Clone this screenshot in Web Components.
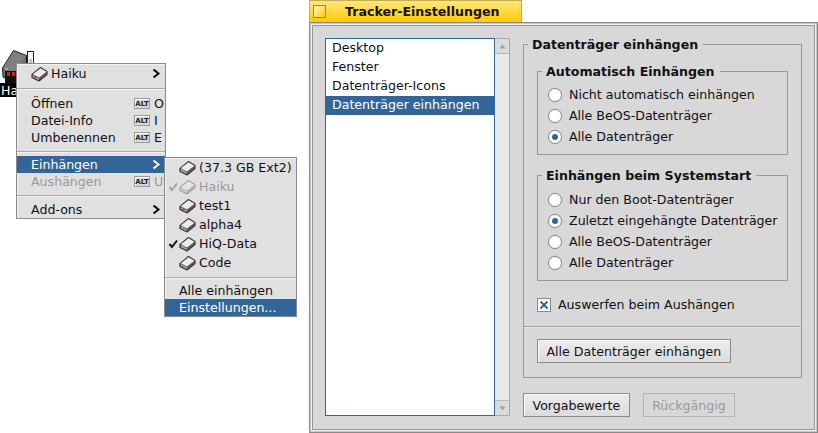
<!DOCTYPE html>
<html>
<head>
<meta charset="utf-8">
<title>Tracker-Einstellungen</title>
<style>
  html, body { margin: 0; height: 100%; background: #fff; overflow: hidden; }
  body { font: 12.6px "DejaVu Sans", sans-serif; color: #111; }
</style>
</head>
<body>
<desktop-icon label="Haiku"></desktop-icon>

<popup-menu style="left:16px;top:63px;width:148px;padding-top:1px">
  <menu-row arrow><disk-icon slot="icon" kind="boot"></disk-icon>Haiku</menu-row>
  <menu-sep big></menu-sep>
  <menu-row key="O">Öffnen</menu-row>
  <menu-row key="I">Datei-Info</menu-row>
  <menu-row key="E">Umbenennen</menu-row>
  <menu-sep></menu-sep>
  <menu-row selected arrow>Einhängen</menu-row>
  <menu-row disabled key="U">Aushängen</menu-row>
  <menu-sep style="height:11px"></menu-sep>
  <menu-row arrow>Add-ons</menu-row>
</popup-menu>

<popup-menu style="left:164px;top:157px;width:131px">
  <menu-row sub tall><disk-icon slot="icon"></disk-icon>(37.3 GB Ext2)</menu-row>
  <menu-row sub tall disabled check><disk-icon slot="icon" faded></disk-icon>Haiku</menu-row>
  <menu-row sub tall><disk-icon slot="icon" kind="red"></disk-icon>test1</menu-row>
  <menu-row sub tall><disk-icon slot="icon"></disk-icon>alpha4</menu-row>
  <menu-row sub tall check><disk-icon slot="icon"></disk-icon>HiQ-Data</menu-row>
  <menu-row sub tall><disk-icon slot="icon" kind="green"></disk-icon>Code</menu-row>
  <menu-sep></menu-sep>
  <menu-row sub plain>Alle einhängen</menu-row>
  <menu-row sub plain selected>Einstellungen...</menu-row>
</popup-menu>

<app-window title="Tracker-Einstellungen">
  <list-view slot="list">
    <list-row>Desktop</list-row>
    <list-row>Fenster</list-row>
    <list-row>Datenträger-Icons</list-row>
    <list-row selected>Datenträger einhängen</list-row>
  </list-view>

  <group-box slot="pane" label="Datenträger einhängen" outer>
    <group-box label="Automatisch Einhängen">
      <radio-row>Nicht automatisch einhängen</radio-row>
      <radio-row>Alle BeOS-Datenträger</radio-row>
      <radio-row checked>Alle Datenträger</radio-row>
    </group-box>
    <group-box label="Einhängen beim Systemstart" style="margin-top:20px;padding-top:13px">
      <radio-row>Nur den Boot-Datenträger</radio-row>
      <radio-row checked>Zuletzt eingehängte Datenträger</radio-row>
      <radio-row>Alle BeOS-Datenträger</radio-row>
      <radio-row>Alle Datenträger</radio-row>
    </group-box>
    <check-row>Auswerfen beim Aushängen</check-row>
    <push-button slot="footer">Alle Datenträger einhängen</push-button>
  </group-box>

  <push-button slot="buttons">Vorgabewerte</push-button>
  <push-button slot="buttons" disabled>Rückgängig</push-button>
</app-window>

<script>
  class DiskIcon extends HTMLElement {
    constructor() {
      super();
      this.attachShadow({ mode: "open" });
      const led = { red: "#d22", green: "#3b3", boot: "#d11" }[this.getAttribute("kind")] || "#999";
      const faded = this.hasAttribute("faded");
      this.shadowRoot.innerHTML = `
        <style>
          :host { display: block; width: 17px; height: 16px; }
          svg { display: block; opacity: ${faded ? 0.35 : 1}; }
        </style>
        <svg width="17" height="16" viewBox="0 0 17 16">
          <path d="M1 8.5 L9.5 1.5 L16 5.5 L16 8.5 L8 15 L1 11.5 Z" fill="#5c5c5c" stroke="#3a3a3a" stroke-width="1.2" stroke-linejoin="round"/>
          <path d="M1.8 8.3 L9.5 2.2 L15.4 5.7 L8 11.6 Z" fill="#ececec"/>
          <path d="M2 9.3 L7.7 12.5 L7.7 14 L2 11 Z" fill="#b0b0b0"/>
          <rect x="3.5" y="10.2" width="2" height="1.6" fill="${led}"/>
        </svg>`;
    }
  }
  customElements.define("disk-icon", DiskIcon);

  class DesktopIcon extends HTMLElement {
    constructor() {
      super();
      this.attachShadow({ mode: "open" });
      this.shadowRoot.innerHTML = `
        <style>
          :host { position: absolute; left: 0; top: 50px; width: 40px; display: block; }
          svg { display: block; }
          .name { background: #000; color: #fff; width: 60px; height: 14px; line-height: 15px; padding-left: 1px; }
        </style>
        <svg width="36" height="33" viewBox="0 0 36 33">
          <path d="M2.5 18 L13.5 0.5 L26.5 5.5 L26.5 26 L12 32 L3 27 Z" fill="#6f6f6f" stroke="#1c1c1c"/>
          <path d="M3 18 L13.5 1.5 L26 6 L14 22 Z" fill="#808080"/>
          <rect x="27.5" y="1.5" width="6" height="22" fill="#fff" stroke="#222"/>
          <rect x="29" y="9" width="3" height="4" fill="#9fdc9f"/>
          <rect x="5" y="21" width="11" height="12" fill="#111"/>
          <rect x="7" y="22" width="3" height="4" fill="#c22"/>
          <rect x="12" y="22" width="3" height="4" fill="#c22"/>
          <rect x="5" y="18" width="3" height="2" fill="#6c6"/>
        </svg>
        <div class="name">${this.getAttribute("label")}</div>`;
    }
  }
  customElements.define("desktop-icon", DesktopIcon);

  class PopupMenu extends HTMLElement {
    constructor() {
      super();
      this.attachShadow({ mode: "open" });
      this.shadowRoot.innerHTML = `
        <style>
          :host { position: absolute; display: block; background: #e0e0e0; border: 1px solid #8a8a8a; box-shadow: inset 1px 1px 0 #f2f2f2; }
        </style>
        <slot></slot>`;
    }
  }
  customElements.define("popup-menu", PopupMenu);

  class MenuSep extends HTMLElement {
    constructor() {
      super();
      this.attachShadow({ mode: "open" });
      this.shadowRoot.innerHTML = `
        <style>
          :host { display: flex; align-items: center; height: 10px; }
          :host([big]) { height: 13px; }
          div { flex: 1; height: 1px; background: #a8a8a8; box-shadow: 0 1px 0 #f4f4f4; }
        </style>
        <div></div>`;
    }
  }
  customElements.define("menu-sep", MenuSep);

  class MenuRow extends HTMLElement {
    constructor() {
      super();
      this.attachShadow({ mode: "open" });
      const key = this.getAttribute("key");
      this.shadowRoot.innerHTML = `
        <style>
          :host { display: flex; align-items: center; height: 17px; padding: 0 5px 0 14px; white-space: nowrap; }
          :host([tall]) { height: 19px; }
          :host([selected]) { background: #336698; color: #fff; }
          :host([disabled]) { color: #9a9a9a; }
          .check { display: none; position: absolute; left: 3px; width: 11px; }
          :host([check]) .check { display: block; }
          .wrap { display: flex; align-items: center; flex: 1; min-width: 0; }
          ::slotted(disk-icon) { margin-right: 3px; }
          .key { margin-left: auto; display: flex; align-items: center; gap: 4px; }
          .alt { flex: none; width: 14px; height: 9px; border: 1px solid #9a9a9a; background: #d8d8d8; box-shadow: inset 1px 1px 0 #fff; font: bold 7px "DejaVu Sans", sans-serif; line-height: 10px; text-align: center; color: #222; }
          .letter { width: 6px; }
          .arrow { margin-left: auto; display: block; }
          svg { display: block; }
        </style>
        <svg class="check" width="11" height="10" viewBox="0 0 11 10"><path d="M1.5 5 L4 8 L9 1.5" fill="none" stroke="${this.hasAttribute("disabled") ? "#a0a0a0" : "#111"}" stroke-width="2"/></svg>
        <span class="wrap"><slot name="icon"></slot><slot></slot></span>
        ${key ? `<span class="key"><span class="alt">ALT</span><span class="letter">${key}</span></span>` : ""}
        ${this.hasAttribute("arrow") ? `<svg class="arrow" width="8" height="9" viewBox="0 0 8 9"><path d="M1.5 0.5 L6.5 4.5 L1.5 8.5" fill="none" stroke="${this.hasAttribute("selected") ? "#fff" : "#000"}" stroke-width="2"/></svg>` : ""}`;
    }
  }
  customElements.define("menu-row", MenuRow);

  class AppWindow extends HTMLElement {
    constructor() {
      super();
      this.attachShadow({ mode: "open" });
      this.shadowRoot.innerHTML = `
        <style>
          :host { position: absolute; left: 309px; top: 0; width: 509px; height: 433px; display: flex; flex-direction: column; }
          .tab { box-sizing: border-box; width: 213px; height: 22px; flex: none; display: flex; align-items: center; border: 1px solid #c4ae52; border-bottom: 0; background: linear-gradient(#ffe680, #ffcb00); }
          .btn { width: 11px; height: 11px; margin-left: 3px; border: 1px solid #a08c30; background: linear-gradient(135deg, #fff6c8, #ffcb00); }
          .title { margin-left: 19px; font-weight: bold; white-space: nowrap; }
          .frame { flex: 1; min-height: 0; display: flex; box-sizing: border-box; border: 1px solid #8a8a8a; padding: 2px; background: #c8c8c8; }
          .panel { flex: 1; box-sizing: border-box; border: 1px solid #989898; box-shadow: 0 0 0 1px #f0f0f0; background: #d8d8d8; padding: 12px; display: grid; grid-template-columns: 185px 1fr; column-gap: 13px; }
          .right { display: flex; flex-direction: column; padding-top: 6px; }
          .buttons { display: flex; gap: 13px; margin-top: auto; }
          ::slotted(list-view) { height: 378px; }
        </style>
        <div class="tab"><span class="btn"></span><span class="title">${this.getAttribute("title")}</span></div>
        <div class="frame"><div class="panel">
          <slot name="list"></slot>
          <div class="right">
            <slot name="pane"></slot>
            <div class="buttons"><slot name="buttons"></slot></div>
          </div>
        </div></div>`;
    }
  }
  customElements.define("app-window", AppWindow);

  class ListView extends HTMLElement {
    constructor() {
      super();
      this.attachShadow({ mode: "open" });
      this.shadowRoot.innerHTML = `
        <style>
          :host { display: flex; box-sizing: border-box; }
          .items { flex: 1; background: #fff; border: 1px solid #336698; }
          .bar { width: 14px; display: flex; flex-direction: column; justify-content: space-between; background: #e9e9e9; border: 1px solid #a8a8a8; border-left: 0; }
          .end { height: 14px; background: #dcdcdc; display: flex; align-items: center; justify-content: center; }
          .end.up { border-bottom: 1px solid #b8b8b8; }
          .end.down { border-top: 1px solid #b8b8b8; }
          svg { display: block; }
        </style>
        <div class="items"><slot></slot></div>
        <div class="bar">
          <div class="end up"><svg width="7" height="5" viewBox="0 0 7 5"><path d="M0.5 4.5 L3.5 0.5 L6.5 4.5 Z" fill="#a0a0a0"/></svg></div>
          <div class="end down"><svg width="7" height="5" viewBox="0 0 7 5"><path d="M0.5 0.5 L3.5 4.5 L6.5 0.5 Z" fill="#a0a0a0"/></svg></div>
        </div>`;
    }
  }
  customElements.define("list-view", ListView);

  class ListRow extends HTMLElement {
    constructor() {
      super();
      this.attachShadow({ mode: "open" });
      this.shadowRoot.innerHTML = `
        <style>
          :host { display: flex; align-items: center; box-sizing: border-box; height: 19px; padding: 0 0 2px 6px; white-space: nowrap; }
          :host([selected]) { background: #336698; color: #fff; }
        </style>
        <slot></slot>`;
    }
  }
  customElements.define("list-row", ListRow);

  class GroupBox extends HTMLElement {
    constructor() {
      super();
      this.attachShadow({ mode: "open" });
      this.shadowRoot.innerHTML = `
        <style>
          :host { display: block; position: relative; box-sizing: border-box; border: 1px solid #989898; padding: 12px 0 7px; }
          :host([outer]) { padding: 26px 13px 0; }
          .legend { position: absolute; left: 4px; top: -9px; padding: 0 5px 0 4px; background: #d8d8d8; font-weight: bold; line-height: 17px; white-space: nowrap; }
          .foot { display: none; margin: 14px -13px 0; border-top: 1px solid #a0a0a0; padding: 12px 13px 14px; box-shadow: inset 0 1px 0 #e8e8e8; }
          :host([outer]) .foot { display: block; }
        </style>
        <div class="legend">${this.getAttribute("label")}</div>
        <slot></slot>
        <div class="foot"><slot name="footer"></slot></div>`;
    }
  }
  customElements.define("group-box", GroupBox);

  class RadioRow extends HTMLElement {
    constructor() {
      super();
      this.attachShadow({ mode: "open" });
      this.shadowRoot.innerHTML = `
        <style>
          :host { display: flex; align-items: center; height: 21px; padding-left: 10px; white-space: nowrap; }
          .dot { width: 12px; height: 12px; border-radius: 50%; border: 1px solid #8a8a8a; background: #fff; margin-right: 7px; display: flex; align-items: center; justify-content: center; flex: none; box-shadow: 0 0 0 0.5px #c8c8c8; }
          :host([checked]) .dot::after { content: ""; width: 6px; height: 6px; border-radius: 50%; background: #336698; }
        </style>
        <span class="dot"></span><slot></slot>`;
    }
  }
  customElements.define("radio-row", RadioRow);

  class CheckRow extends HTMLElement {
    constructor() {
      super();
      this.attachShadow({ mode: "open" });
      this.shadowRoot.innerHTML = `
        <style>
          :host { display: flex; align-items: flex-start; height: 14px; line-height: 13px; margin-top: 17px; white-space: nowrap; }
          .box { width: 12px; height: 12px; border: 1px solid #8a8a8a; background: #fff; margin-right: 7px; flex: none; }
          svg { display: block; }
        </style>
        <span class="box"><svg width="12" height="12" viewBox="0 0 12 12"><path d="M2.5 2.5 L9.5 9.5 M9.5 2.5 L2.5 9.5" stroke="#336698" stroke-width="2"/></svg></span><slot></slot>`;
    }
  }
  customElements.define("check-row", CheckRow);

  class PushButton extends HTMLElement {
    constructor() {
      super();
      this.attachShadow({ mode: "open" });
      this.shadowRoot.innerHTML = `
        <style>
          :host { display: inline-flex; align-items: center; height: 24px; box-sizing: border-box; padding: 0 8.5px; border: 1px solid #8a8a8a; background: linear-gradient(#ececec, #dcdcdc); box-shadow: inset 1px 1px 0 #fafafa; white-space: nowrap; }
          :host([disabled]) { color: #9a9a9a; border-color: #b4b4b4; background: #d8d8d8; box-shadow: none; }
        </style>
        <slot></slot>`;
    }
  }
  customElements.define("push-button", PushButton);
</script>
</body>
</html>
